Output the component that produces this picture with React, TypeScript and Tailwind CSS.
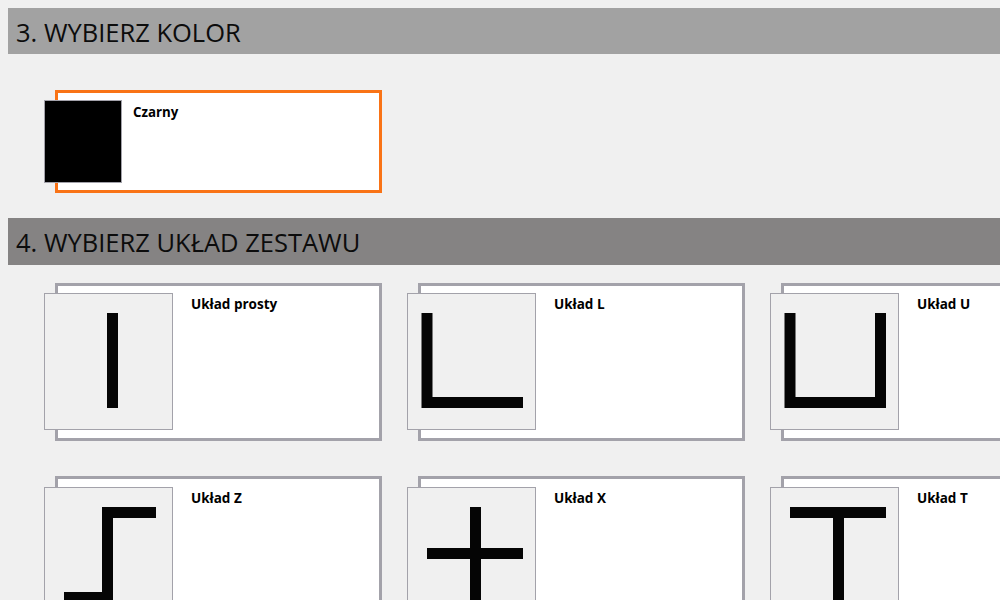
const layouts = [
  { name: 'Układ prosty', path: 'M68.5 20V115', top: 'mt-[7px]' },
  { name: 'Układ L', path: 'M20 20V109.5H116', top: 'mt-[7px]' },
  { name: 'Układ U', path: 'M20 20V109.5H110.5V20', top: 'mt-[7px]' },
  { name: 'Układ Z', path: 'M20 110.5H63.5V25.5H112', top: 'mt-[8px]' },
  { name: 'Układ X', path: 'M68.5 20V115M20 66.5H116', top: 'mt-[8px]' },
  { name: 'Układ T', path: 'M20 25.5H116M68.5 25.5V115', top: 'mt-[8px]' },
];

function SectionHeader({ title, className }: { title: string; className: string }) {
  return (
    <h2 className={`flex items-center pl-2 pt-[2px] text-[25.5px] font-normal text-[#0c0c0c] ${className}`}>
      {title}
    </h2>
  );
}

function LayoutCard({ name, path, top }: { name: string; path: string; top: string }) {
  return (
    <div className="flex h-[158px] border-[3px] border-[#a3a2aa] bg-white">
      <div className={`-ml-[14px] h-[137px] w-[129px] shrink-0 border border-[#a3a2aa] bg-[#f0f0f0] ${top}`}>
        <svg width="127" height="135" viewBox="1 1 127 135">
          <path d={path} fill="none" stroke="#050505" strokeWidth="11" strokeLinecap="butt" strokeLinejoin="miter" />
        </svg>
      </div>
      <div className={`ml-[18px] pt-[2px] text-[13.5px] leading-[18px] font-bold text-black ${top}`}>{name}</div>
    </div>
  );
}

export default function App() {
  return (
    <div className="h-[600px] w-[1000px] overflow-hidden bg-[#f0f0f0] pl-2 pt-2 font-['Open_Sans','Noto_Sans',sans-serif]">
      <SectionHeader title="3. WYBIERZ KOLOR" className="h-[46px] bg-[#a2a2a2]" />

      <div className="ml-[47px] mt-[36px] flex h-[103px] w-[327px] border-[3px] border-[#f97316] bg-white">
        <div className="-ml-[14px] mt-[7px] h-[83px] w-[78px] shrink-0 border border-[#a3a2aa] bg-black" />
        <div className="ml-[11px] mt-[10px] text-[13.3px] leading-[18px] font-bold text-black">Czarny</div>
      </div>

      <SectionHeader title="4. WYBIERZ UKŁAD ZESTAWU" className="mt-[25px] h-[47px] bg-[#858383]" />

      <div className="ml-[47px] mt-[18px] grid w-[1100px] grid-cols-[327px_327px_327px] gap-x-[36px] gap-y-[35px]">
        {layouts.map((layout) => (
          <LayoutCard key={layout.name} name={layout.name} path={layout.path} top={layout.top} />
        ))}
      </div>
    </div>
  );
}
